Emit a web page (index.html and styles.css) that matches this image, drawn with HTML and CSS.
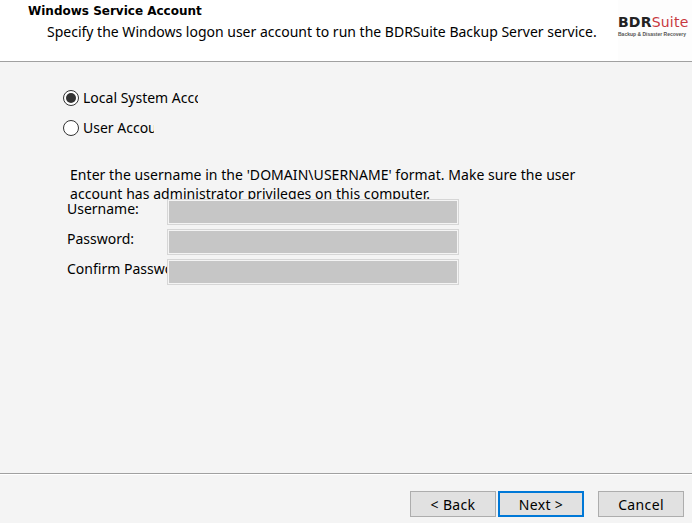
FILE: index.html
```html
<!DOCTYPE html>
<html lang="en">
<head>
<meta charset="utf-8">
<title>Windows Service Account</title>
<link rel="stylesheet" href="styles.css">
</head>
<body>
<div class="dialog">
  <header class="head">
    <div class="head-text">
      <div class="title">Windows Service Account</div>
      <div class="subtitle">Specify the Windows logon user account to run the BDRSuite Backup Server service.</div>
    </div>
    <div class="logo">
      <div class="logo-name"><span class="logo-dark">BDR</span><span class="logo-red">Suite</span></div>
      <div class="logo-tag">Backup &amp; Disaster Recovery</div>
    </div>
  </header>
  <main class="body">
    <div class="radio-row">
      <span class="radio radio-on"></span>
      <span class="radio-label label-local">Local System Account</span>
    </div>
    <div class="radio-row">
      <span class="radio"></span>
      <span class="radio-label label-user">User Account</span>
    </div>
    <p class="note">Enter the username in the 'DOMAIN\USERNAME' format. Make sure the user account has administrator privileges on this computer.</p>
    <div class="fields">
      <div class="field"><span class="field-label">Username:</span><span class="input"></span></div>
      <div class="field"><span class="field-label">Password:</span><span class="input"></span></div>
      <div class="field"><span class="field-label">Confirm Password:</span><span class="input"></span></div>
    </div>
  </main>
  <footer class="foot">
    <button class="btn" type="button">&lt; Back</button>
    <button class="btn btn-default" type="button">Next &gt;</button>
    <button class="btn btn-cancel" type="button">Cancel</button>
  </footer>
</div>
</body>
</html>
```
FILE: styles.css
```css
* { box-sizing: border-box; }
html, body { margin: 0; padding: 0; }
body {
  width: 692px;
  height: 523px;
  overflow: hidden;
  background: #f4f4f4;
  color: #000;
  font-family: "Noto Sans", sans-serif;
  font-size: 14px;
}
.dialog { display: flex; flex-direction: column; height: 523px; }
.head {
  height: 62px;
  background: #fff;
  border-bottom: 1px solid #a0a0a0;
  display: flex;
  justify-content: space-between;
  flex: none;
}
.head-text { padding: 2px 0 0 28px; }
.title {
  font-family: "DejaVu Sans", sans-serif;
  font-weight: 700;
  font-size: 12px;
  line-height: 18px;
}
.subtitle {
  margin: 2px 0 0 19px;
  font-size: 14px;
  line-height: 20px;
  white-space: nowrap;
}
.logo { width: 74px; padding: 14px 0 0 0; background: #fdfdfd; }
.logo-name {
  font-family: "DejaVu Sans", sans-serif;
  font-size: 14px;
  line-height: 17px;
  letter-spacing: 0.2px;
  white-space: nowrap;
}
.logo-dark { font-weight: 700; color: #222; }
.logo-red { color: #c8383f; }
.logo-tag {
  font-family: "Liberation Sans", sans-serif;
  font-size: 5px;
  font-weight: 700;
  line-height: 6px;
  color: #555;
  white-space: nowrap;
}
.body { flex: 1; padding: 26px 0 0 63px; }
.radio-row { display: flex; align-items: center; height: 20px; margin-bottom: 10px; }
.radio {
  width: 16px;
  height: 16px;
  border: 1px solid #333;
  border-radius: 50%;
  background: #fff;
  flex: none;
  margin-right: 4px;
  position: relative;
}
.radio-on::after {
  content: "";
  position: absolute;
  inset: 2px;
  border-radius: 50%;
  background: #333;
}
.radio-label { overflow: hidden; white-space: nowrap; line-height: 20px; }
.label-local { width: 115px; }
.label-user { width: 71px; }
.note {
  margin: 27px 0 0 7px;
  width: 520px;
  height: 34px;
  overflow: hidden;
  font-size: 14px;
  line-height: 19px;
  letter-spacing: 0.05px;
}
.fields { margin-left: 4px; }
.field { display: flex; height: 26px; margin-bottom: 4px; }
.field-label {
  width: 100px;
  overflow: hidden;
  white-space: nowrap;
  line-height: 20px;
  flex: none;
}
.input {
  width: 292px;
  height: 26px;
  background: #c6c6c6;
  border: 1px solid #d6d6d6;
  box-shadow: inset 0 0 0 1px #f4f4f4;
  flex: none;
}
.foot {
  height: 50px;
  flex: none;
  border-top: 1px solid #a0a0a0;
  box-shadow: inset 0 1px 0 #fff;
  display: flex;
  padding: 17px 8px 0 410px;
  gap: 2px;
}
.btn {
  width: 86px;
  height: 26px;
  padding: 0;
  background: #e1e1e1;
  border: 1px solid #adadad;
  border-radius: 0;
  font-family: "Noto Sans", sans-serif;
  font-size: 14px;
  letter-spacing: 0.35px;
  color: #000;
}
.btn-default { border: 2px solid #0078d7; }
.btn-cancel { margin-left: 12px; }
```
